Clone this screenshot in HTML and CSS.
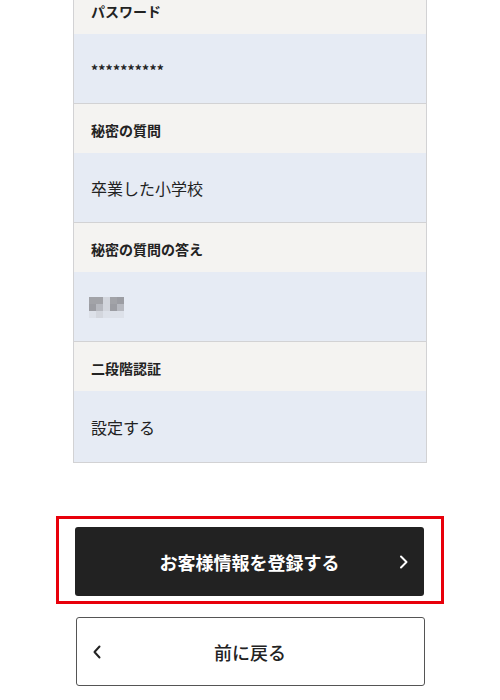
FILE: index.html
```html
<!DOCTYPE html>
<html lang="ja">
<head>
<meta charset="utf-8">
<title>お客様情報の確認</title>
<link rel="stylesheet" href="styles.css">
</head>
<body>
<main class="page">
  <dl class="info">
    <dt class="info-label">パスワード</dt>
    <dd class="info-value info-value--mask">**********</dd>
    <dt class="info-label">秘密の質問</dt>
    <dd class="info-value">卒業した小学校</dd>
    <dt class="info-label">秘密の質問の答え</dt>
    <dd class="info-value">
      <span class="mosaic" aria-label="非表示">
        <i class="c1"></i><i class="c1"></i><i class="c4"></i><i class="c1"></i><i class="c2"></i>
        <i class="c2"></i><i class="c3"></i><i class="c4"></i><i class="c2"></i><i class="c3"></i>
        <i class="c5"></i><i class="c4"></i><i class="c5"></i><i class="c5"></i><i class="c5"></i>
      </span>
    </dd>
    <dt class="info-label">二段階認証</dt>
    <dd class="info-value">設定する</dd>
  </dl>

  <div class="actions">
    <div class="highlight">
      <a class="btn btn-primary" href="#">
        <span class="btn-text">お客様情報を登録する</span>
        <svg class="chev chev-right" width="10" height="14" viewBox="0 0 10 14"><path d="M2 1.5 L7.5 7 L2 12.5" fill="none" stroke="#fff" stroke-width="2" stroke-linecap="round" stroke-linejoin="round"/></svg>
      </a>
    </div>
    <a class="btn btn-back" href="#">
      <svg class="chev chev-left" width="10" height="14" viewBox="0 0 10 14"><path d="M7.5 1.5 L2.5 7 L7.5 12.5" fill="none" stroke="#222" stroke-width="2" stroke-linecap="round" stroke-linejoin="round"/></svg>
      <span class="btn-text">前に戻る</span>
    </a>
  </div>
</main>
</body>
</html>
```

FILE: styles.css
```css
* { box-sizing: border-box; }

html, body {
  margin: 0;
  padding: 0;
  background: #fff;
}

body {
  font-family: "Noto Sans CJK JP", "Noto Sans", sans-serif;
  color: #222;
}

.page {
  width: 500px;
  height: 700px;
  overflow: hidden;
}

.info {
  width: 354px;
  margin: -16px auto 0;
  border: 1px solid #d2d2d4;
  display: flex;
  flex-direction: column;
}

.info-label {
  margin: 0;
  height: 49px;
  padding: 2px 0 0 17px;
  display: flex;
  align-items: center;
  background: #f4f3f1;
  font-size: 14px;
  font-weight: bold;
  line-height: 1;
}

.info-value {
  margin: 0;
  height: 70px;
  padding: 0 0 0 17px;
  display: flex;
  align-items: center;
  background: #e6ebf4;
  border-bottom: 1px solid #d2d2d4;
  font-size: 16px;
  line-height: 1;
}

.info-value:last-child {
  border-bottom: 0;
  height: 71px;
}

.info-value--mask {
  font-size: 14px;
  font-weight: bold;
  letter-spacing: 0.2px;
  padding-top: 2px;
}

.mosaic {
  display: grid;
  grid-template-columns: repeat(5, 7px);
  grid-template-rows: repeat(3, 7px);
  margin-left: -2px;
  margin-top: 2px;
}

.mosaic i { display: block; }
.mosaic .c1 { background: #a2a3a8; }
.mosaic .c2 { background: #9c9da3; }
.mosaic .c3 { background: #b7b9c0; }
.mosaic .c4 { background: #d3d6dd; }
.mosaic .c5 { background: #dde1e9; }

.actions {
  margin-top: 53px;
  display: flex;
  flex-direction: column;
  align-items: center;
  gap: 13px;
}

.highlight {
  width: 388px;
  border: 3px solid #e8000b;
  padding: 8px 17px 5px 16px;
}

.btn {
  position: relative;
  display: flex;
  align-items: center;
  justify-content: center;
  width: 349px;
  height: 69px;
  border-radius: 3px;
  text-decoration: none;
  font-size: 18px;
  line-height: 1;
}

.btn-primary {
  background: #222;
  color: #fff;
  font-weight: bold;
}

.btn-back {
  background: #fff;
  color: #222;
  border: 1.5px solid #555;
  font-weight: 500;
}

.chev {
  position: absolute;
  top: 50%;
  margin-top: -7px;
}

.chev-right { right: 15px; }
.chev-left { left: 15px; }
```
